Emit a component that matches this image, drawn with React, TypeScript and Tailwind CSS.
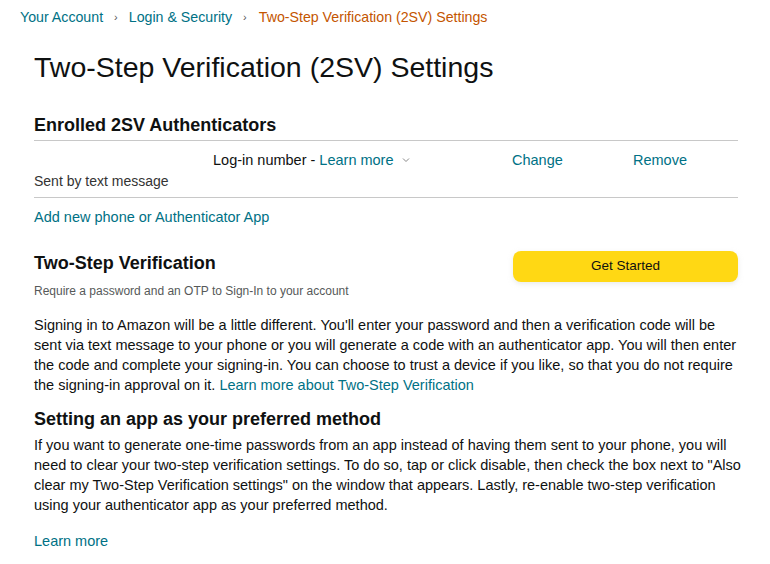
import React from "react";

const font = { fontFamily: '"Liberation Sans", Arial, sans-serif' };

export default function App() {
  return (
    <div className="w-[770px] h-[564px] bg-white overflow-hidden text-[#0f1111]" style={font}>
      <nav className="flex items-center pl-[20px] pt-[8px] h-[27px] text-[14.2px] leading-[19px]">
        <span className="text-[#007185]">Your Account</span>
        <span className="mx-[11px] text-[#555] text-[11px]">›</span>
        <span className="text-[#007185]">Login &amp; Security</span>
        <span className="ml-[11px] mr-[12px] text-[#555] text-[11px]">›</span>
        <span className="text-[#c45500]">Two-Step Verification (2SV) Settings</span>
      </nav>
      <div className="pl-[34px] w-[738px]">
        <h1 className="mt-[22px] text-[28.5px] leading-[36px] font-normal">Two-Step Verification (2SV) Settings</h1>
        <h2 className="mt-[28px] text-[18px] leading-[24px] font-bold">Enrolled 2SV Authenticators</h2>
        <div className="mt-[3px] border-t border-[#c8c8c8]" />
        <div className="relative h-[56px] text-[14.5px] leading-[20px]">
          <div className="absolute left-[179px] top-[9px] flex items-center">
            <span>Log-in number - </span>
            <span className="ml-[4px] text-[#007185]">Learn more</span>
            <svg className="ml-[8px]" width="8" height="6" viewBox="0 0 8 6" fill="none">
              <path d="M1 1.5 L4 4.5 L7 1.5" stroke="#888" strokeWidth="1" />
            </svg>
          </div>
          <div className="absolute left-[478px] top-[9px] text-[#007185]">Change</div>
          <div className="absolute left-[599px] top-[9px] text-[#007185]">Remove</div>
          <div className="absolute left-0 top-[30px] text-[14px] text-[#333]">Sent by text message</div>
        </div>
        <div className="border-t border-[#c8c8c8]" />
        <div className="mt-[9px] text-[14.5px] leading-[20px] text-[#007185]">Add new phone or Authenticator App</div>
        <div className="mt-[24px] flex justify-between items-start">
          <div>
            <h2 className="text-[18px] leading-[24px] font-bold">Two-Step Verification</h2>
            <div className="mt-[7px] text-[12px] leading-[18px] text-[#565959]">Require a password and an OTP to Sign-In to your account</div>
          </div>
          <button className="w-[225px] h-[31px] rounded-[8px] bg-[#ffd814] text-[13.5px] text-[#0f1111] shadow-[0_2px_5px_rgba(213,217,217,0.5)]">Get Started</button>
        </div>
        <p className="mt-[15px] text-[14.5px] leading-[20px] whitespace-nowrap">
          Signing in to Amazon will be a little different. You'll enter your password and then a verification code will be<br />
          sent via text message to your phone or you will generate a code with an authenticator app. You will then enter<br />
          the code and complete your signing-in. You can choose to trust a device if you like, so that you do not require<br />
          the signing-in approval on it.{" "}
          <span className="text-[#007185]">Learn more about Two-Step Verification</span>
        </p>
        <h2 className="mt-[12px] text-[18px] leading-[24px] font-bold">Setting an app as your preferred method</h2>
        <p className="mt-[4px] text-[14.5px] leading-[20px] whitespace-nowrap">
          If you want to generate one-time passwords from an app instead of having them sent to your phone, you will<br />
          need to clear your two-step verification settings. To do so, tap or click disable, then check the box next to "Also<br />
          clear my Two-Step Verification settings" on the window that appears. Lastly, re-enable two-step verification<br />
          using your authenticator app as your preferred method.
        </p>
        <div className="mt-[16px] text-[14.5px] leading-[20px] text-[#007185]">Learn more</div>
      </div>
    </div>
  );
}
